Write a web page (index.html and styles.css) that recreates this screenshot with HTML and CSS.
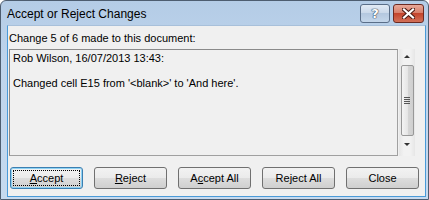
FILE: index.html
```html
<!DOCTYPE html>
<html lang="en">
<head>
  <meta charset="UTF-8" />
  <title>Accept or Reject Changes</title>
  <link rel="stylesheet" href="styles.css">
</head>
<body>

  <div class="window">
    <div class="titlebar">
      <span class="title">Accept or Reject Changes</span>
      <div class="caption-btns">
        <button class="cap help">?</button>
        <button class="cap close">
          <svg width="13" height="11" viewBox="0 0 13 11">
            <path d="M2 1.5 L11 9.5 M11 1.5 L2 9.5" stroke="#4a1a12" stroke-width="4.2" stroke-linecap="square" fill="none"/>
            <path d="M2 1.5 L11 9.5 M11 1.5 L2 9.5" stroke="#fff" stroke-width="2.2" stroke-linecap="square" fill="none"/>
          </svg>
        </button>
      </div>
    </div>

    <div class="client">
      <div class="label">Change 5 of 6 made to this document:</div>
      <div class="changes">
        <div class="textbox">
          <div>Rob Wilson, 16/07/2013 13:43:</div>
          <div>&nbsp;</div>
          <div>Changed cell E15 from '&lt;blank&gt;' to 'And here'.</div>
        </div>
        <div class="scrollbar">
          <div class="arrow up"></div>
          <div class="thumb"><span class="grip"></span></div>
          <div class="arrow down"></div>
        </div>
      </div>
      <div class="buttons">
        <button class="btn default"><span class="focus"><u>A</u>ccept</span></button>
        <button class="btn"><u>R</u>eject</button>
        <button class="btn">A<u>c</u>cept All</button>
        <button class="btn">Re<u>j</u>ect All</button>
        <button class="btn">Close</button>
      </div>
    </div>
  </div>

</body>
</html>
```

FILE: styles.css
```css
body {
  margin: 0;
  padding: 0;
  width: 429px;
  height: 200px;
  overflow: hidden;
  background: #fff;
  font-family: 'Liberation Sans', Arial, sans-serif;
}
.window {
  width: 429px;
  height: 200px;
  box-sizing: border-box;
  border: 1px solid #4d5d70;
  border-radius: 6px 6px 0 0;
  background: linear-gradient(to bottom, #b4cce6 0%, #bed4ec 30%, #c6daef 100%);
  display: flex;
  flex-direction: column;
}
.titlebar {
  height: 24px;
  display: flex;
  align-items: flex-start;
  justify-content: space-between;
  padding: 0 4px 0 6px;
}
.title {
  font-size: 12px;
  color: #000;
  margin-top: 6px;
}
.caption-btns {
  display: flex;
  gap: 3px;
  margin-top: 3px;
}
.cap {
  height: 19px;
  border: 1px solid #5a6e88;
  border-radius: 3px;
  padding: 0;
  display: flex;
  align-items: center;
  justify-content: center;
}
.help {
  width: 30px;
  background: linear-gradient(to bottom, #e2ebf5 0%, #cbd9ea 45%, #b4c8df 50%, #c4d6ea 100%);
  font-family: 'DejaVu Sans', sans-serif;
  font-size: 13px;
  font-weight: bold;
  color: #fff;
  text-shadow: 0 0 1px #2c3e55, 0 0 1px #2c3e55, 0 0 1px #2c3e55;
}
.close {
  width: 31px;
  border-color: #6b2a22;
  background: linear-gradient(to bottom, #e8a898 0%, #d8806c 45%, #c4442c 50%, #d27058 100%);
}
.client {
  flex: 1;
  margin: 0 2px 2px 6px;
  background: #f0f0f0;
  border: 1px solid #4a9ad8;
  border-top-color: #a8c0da;
  padding: 0 0 0 1px;
  font-size: 11px;
  color: #000;
}
.label {
  margin-top: 6px;
  line-height: 13px;
}
.changes {
  display: flex;
  margin-top: 4px;
  height: 107px;
}
.textbox {
  width: 389px;
  border: 1px solid #8a8a8a;
  border-right-color: #a0a0a0;
  border-bottom-color: #a0a0a0;
  padding: 2px 0 0 3px;
  line-height: 12.5px;
  box-sizing: border-box;
}
.scrollbar {
  width: 16px;
  margin-left: 1px;
  display: flex;
  flex-direction: column;
  align-items: center;
  background: linear-gradient(to right, #e6e6e6, #f2f2f2 30%, #f2f2f2 70%, #e6e6e6);
}
.arrow {
  height: 16px;
  width: 16px;
  position: relative;
}
.arrow::after {
  content: '';
  position: absolute;
  left: 5px;
  border-left: 3px solid transparent;
  border-right: 3px solid transparent;
}
.arrow.up::after {
  top: 6px;
  border-bottom: 3px solid #333;
}
.arrow.down::after {
  top: 7px;
  border-top: 3px solid #333;
}
.thumb {
  width: 13px;
  height: 71px;
  box-sizing: border-box;
  border: 1px solid #989898;
  border-radius: 2px;
  background: linear-gradient(to right, #f4f4f4, #e6e6e6 50%, #d6d6d6 55%, #cfcfcf);
  display: flex;
  align-items: center;
  justify-content: center;
}
.grip {
  width: 6px;
  height: 7px;
  background: repeating-linear-gradient(to bottom, #555 0 1px, transparent 1px 2px);
}
.buttons {
  display: flex;
  gap: 11px;
  margin: 11px 0 0 1px;
}
.btn {
  width: 73px;
  height: 22px;
  border: 1px solid #707070;
  border-radius: 3px;
  background: linear-gradient(to bottom, #f2f2f2 0%, #ebebeb 48%, #dddddd 52%, #cfcfcf 100%);
  font-family: 'Liberation Sans', Arial, sans-serif;
  font-size: 11px;
  color: #000;
  padding: 0;
}
.btn.default {
  border-color: #3c7fb1;
  box-shadow: inset 0 0 0 1px #8ed2f4;
}
.focus {
  display: block;
  margin: 2px;
  height: 14px;
  line-height: 14px;
  border: 1px dotted #000;
}
```
